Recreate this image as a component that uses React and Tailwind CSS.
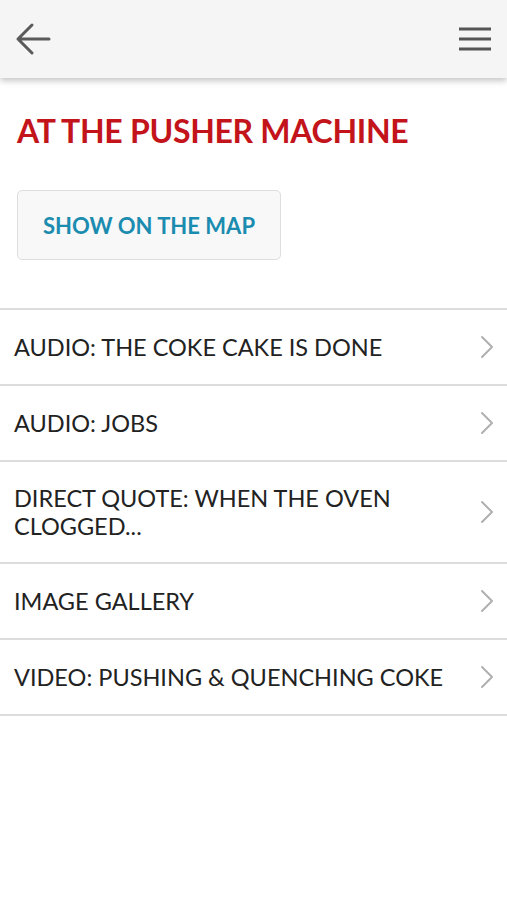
import React from 'react';

const items = [
  'AUDIO: THE COKE CAKE IS DONE',
  'AUDIO: JOBS',
  'DIRECT QUOTE: WHEN THE OVEN CLOGGED...',
  'IMAGE GALLERY',
  'VIDEO: PUSHING & QUENCHING COKE',
];

function Chevron() {
  return (
    <svg width="14" height="24" viewBox="0 0 14 24" fill="none" className="shrink-0">
      <path d="M2 2l10 10L2 22" stroke="#b0b0b0" strokeWidth="2" strokeLinecap="round" strokeLinejoin="round" />
    </svg>
  );
}

export default function App() {
  return (
    <div className="min-h-[900px] bg-white font-['Lato',sans-serif]">
      <header className="h-[78px] bg-[#f5f5f5] flex items-center justify-between px-[15px] shadow-[0_3px_6px_rgba(0,0,0,0.22)] relative">
        <svg width="36" height="34" viewBox="0 0 36 34" fill="none">
          <path d="M34 17H3M17 3L3 17l14 14" stroke="#5a5a5a" strokeWidth="3" strokeLinecap="round" strokeLinejoin="round" />
        </svg>
        <svg width="34" height="24" viewBox="0 0 34 24" fill="none">
          <path d="M1 2h32M1 12h32M1 22h32" stroke="#555" strokeWidth="3" />
        </svg>
      </header>

      <div className="px-[17px] pt-[34px] pb-[48px]">
        <h1 className="text-[32px] leading-[38px] font-bold text-[#c3141b] tracking-[-0.3px]">AT THE PUSHER MACHINE</h1>
        <button className="mt-[40px] w-[264px] h-[70px] border border-[#dedede] rounded-[5px] bg-[#f8f8f8] text-[22px] font-bold text-[#1b8caf]">
          SHOW ON THE MAP
        </button>
      </div>

      <ul className="border-t-2 border-[#dcdcdc]">
        {items.map((t) => (
          <li
            key={t}
            className="flex items-center justify-between gap-3 pl-[14px] pr-[13px] py-[22px] border-b-2 border-[#dcdcdc] min-h-[76px]"
          >
            <span className="text-[23.5px] leading-[28px] text-[#222]">{t}</span>
            <Chevron />
          </li>
        ))}
      </ul>
    </div>
  );
}
